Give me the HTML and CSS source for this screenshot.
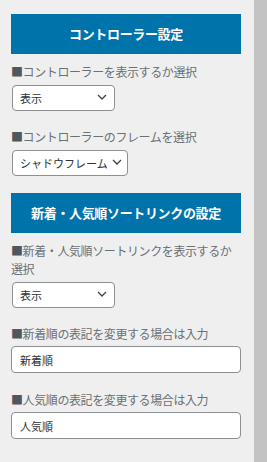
FILE: index.html
```html
<!DOCTYPE html>
<html lang="ja">
<head>
<meta charset="utf-8">
<link rel="stylesheet" href="styles.css">
</head>
<body>
<div class="page">
  <main class="panel">
    <section class="section">
      <h2 class="heading">コントローラー設定</h2>
      <div class="field">
        <label class="label">コントローラーを表示するか選択</label>
        <div class="select-wrap w103">
          <select class="select"><option>表示</option></select>
          <svg class="chev" width="10" height="6" viewBox="0 0 10 6"><path d="M1 1l4 4 4-4" fill="none" stroke="#3c434a" stroke-width="1.3"/></svg>
        </div>
      </div>
      <div class="field">
        <label class="label">コントローラーのフレームを選択</label>
        <div class="select-wrap w116">
          <select class="select"><option>シャドウフレーム</option></select>
          <svg class="chev" width="10" height="6" viewBox="0 0 10 6"><path d="M1 1l4 4 4-4" fill="none" stroke="#3c434a" stroke-width="1.3"/></svg>
        </div>
      </div>
    </section>
    <section class="section">
      <h2 class="heading">新着・人気順ソートリンクの設定</h2>
      <div class="field">
        <label class="label">新着・人気順ソートリンクを表示するか選択</label>
        <div class="select-wrap w103">
          <select class="select"><option>表示</option></select>
          <svg class="chev" width="10" height="6" viewBox="0 0 10 6"><path d="M1 1l4 4 4-4" fill="none" stroke="#3c434a" stroke-width="1.3"/></svg>
        </div>
      </div>
      <div class="field">
        <label class="label">新着順の表記を変更する場合は入力</label>
        <input class="input" type="text" value="新着順">
      </div>
      <div class="field">
        <label class="label">人気順の表記を変更する場合は入力</label>
        <input class="input" type="text" value="人気順">
      </div>
    </section>
  </main>
  <div class="strip"></div>
</div>
</body>
</html>
```

FILE: styles.css
```css
html, body {
  margin: 0;
  padding: 0;
  background: #efefef;
}
body {
  font-family: "Noto Sans CJK JP", "Noto Sans", sans-serif;
  color: #646970;
}
.page {
  display: flex;
  width: 267px;
  height: 462px;
  overflow: hidden;
}
.panel {
  width: 230px;
  padding: 14px 13px 0 11px;
  flex: none;
}
.strip {
  flex: 1;
  background: #c3c3c3;
}
.section {
  margin-bottom: 10px;
}
.heading {
  box-sizing: border-box;
  margin: 0 0 9px;
  height: 40px;
  padding: 10px 0;
  line-height: 20px;
  background: #0073aa;
  color: #fff;
  font-size: 13px;
  font-weight: 700;
  letter-spacing: -0.35px;
  text-align: center;
}
.field {
  margin-bottom: 18px;
}
.label {
  display: block;
  font-size: 12px;
  line-height: 18px;
  letter-spacing: -0.4px;
  margin-bottom: 3px;
  color: #6b7075;
}
.label::before {
  content: "■";
  color: #50575e;
}
.select-wrap {
  position: relative;
  margin-left: 1px;
  height: 26px;
}
.w103 { width: 103px; }
.w116 { width: 116px; }
.select {
  appearance: none;
  -webkit-appearance: none;
  box-sizing: border-box;
  width: 100%;
  height: 26px;
  margin: 0;
  padding: 0 20px 0 7px;
  border: 1px solid #8c8f94;
  border-radius: 4px;
  background: #fff;
  font-family: "Noto Sans CJK JP", sans-serif;
  font-size: 11px;
  color: #2c3338;
}
.chev {
  position: absolute;
  right: 8px;
  top: 10px;
  pointer-events: none;
}
.w116 .chev { right: 6px; }
.input {
  display: block;
  box-sizing: border-box;
  width: 230px;
  height: 27px;
  margin: 0;
  padding: 0 8px;
  border: 1px solid #8c8f94;
  border-radius: 4px;
  background: #fff;
  font-family: "Noto Sans CJK JP", sans-serif;
  font-size: 11px;
  color: #2c3338;
}
```
